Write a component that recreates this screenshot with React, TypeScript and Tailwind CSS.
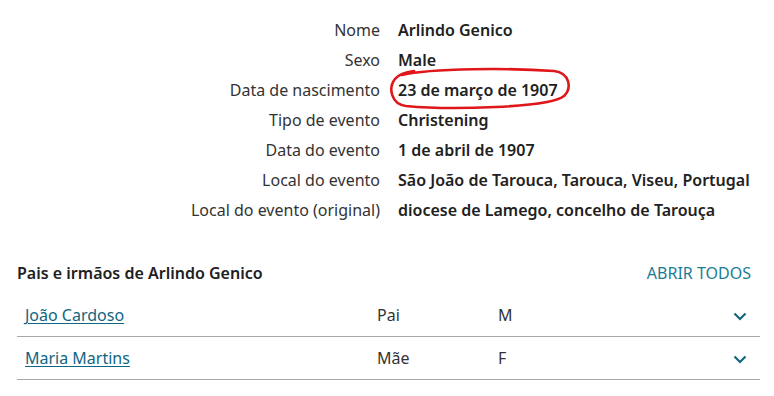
import React from 'react';

const facts: { label: string; value: string; circled?: boolean }[] = [
  { label: 'Nome', value: 'Arlindo Genico' },
  { label: 'Sexo', value: 'Male' },
  { label: 'Data de nascimento', value: '23 de março de 1907', circled: true },
  { label: 'Tipo de evento', value: 'Christening' },
  { label: 'Data do evento', value: '1 de abril de 1907' },
  { label: 'Local do evento', value: 'São João de Tarouca, Tarouca, Viseu, Portugal' },
  { label: 'Local do evento (original)', value: 'diocese de Lamego, concelho de Tarouça' },
];

const family = [
  { name: 'João Cardoso', relation: 'Pai', sex: 'M' },
  { name: 'Maria Martins', relation: 'Mãe', sex: 'F' },
];

const Circle = () => (
  <svg
    className="absolute left-[-12px] top-[-14px] pointer-events-none"
    width="190"
    height="48"
    viewBox="0 0 190 48"
    fill="none"
  >
    <path
      d="M16 10 C45 3, 125 3, 168 6 C184 8, 186 23, 178 31 C164 43, 62 45, 20 41 C5 39, 2 23, 9 14 C13 9, 20 7, 28 6"
      stroke="#e0161b"
      strokeWidth="2.6"
      strokeLinecap="round"
    />
  </svg>
);

export default function App() {
  return (
    <div className="w-[774px] h-[396px] bg-white text-[16px] font-['Noto_Sans',sans-serif] text-[#333]">
      <div className="px-[17px] pt-[15px]">
        {facts.map((f) => (
          <div key={f.label} className="grid grid-cols-[363px_1fr] gap-x-[18px] h-[30px] items-center">
            <div className="text-right text-[#333]">{f.label}</div>
            <div className="font-semibold text-[#212121] whitespace-nowrap">
              <span className="relative">
                {f.value}
                {f.circled && <Circle />}
              </span>
            </div>
          </div>
        ))}
      </div>

      <div className="pl-[17px] pr-[14px] mt-[36px]">
        <div className="flex items-center justify-between h-[24px] pr-[9px]">
          <div className="font-semibold text-[#212121]">Pais e irmãos de Arlindo Genico</div>
          <button className="text-[#1b7c96] uppercase">Abrir todos</button>
        </div>
        <div className="mt-[9px]">
          {family.map((p) => (
            <div key={p.name} className="flex items-center h-[43px] border-b border-[#a8a8a8] pl-[8px] pr-[13px]">
              <a href="#" className="w-[352px] text-[#0f6682] underline underline-offset-2">
                {p.name}
              </a>
              <div className="w-[121px] text-[#333]">{p.relation}</div>
              <div className="flex-1 text-[#333]">{p.sex}</div>
              <svg className="mt-[3px]" width="14" height="9" viewBox="0 0 14 9" fill="none">
                <path d="M1.5 1.5 L7 7 L12.5 1.5" stroke="#15667d" strokeWidth="2.2" />
              </svg>
            </div>
          ))}
        </div>
      </div>
    </div>
  );
}
